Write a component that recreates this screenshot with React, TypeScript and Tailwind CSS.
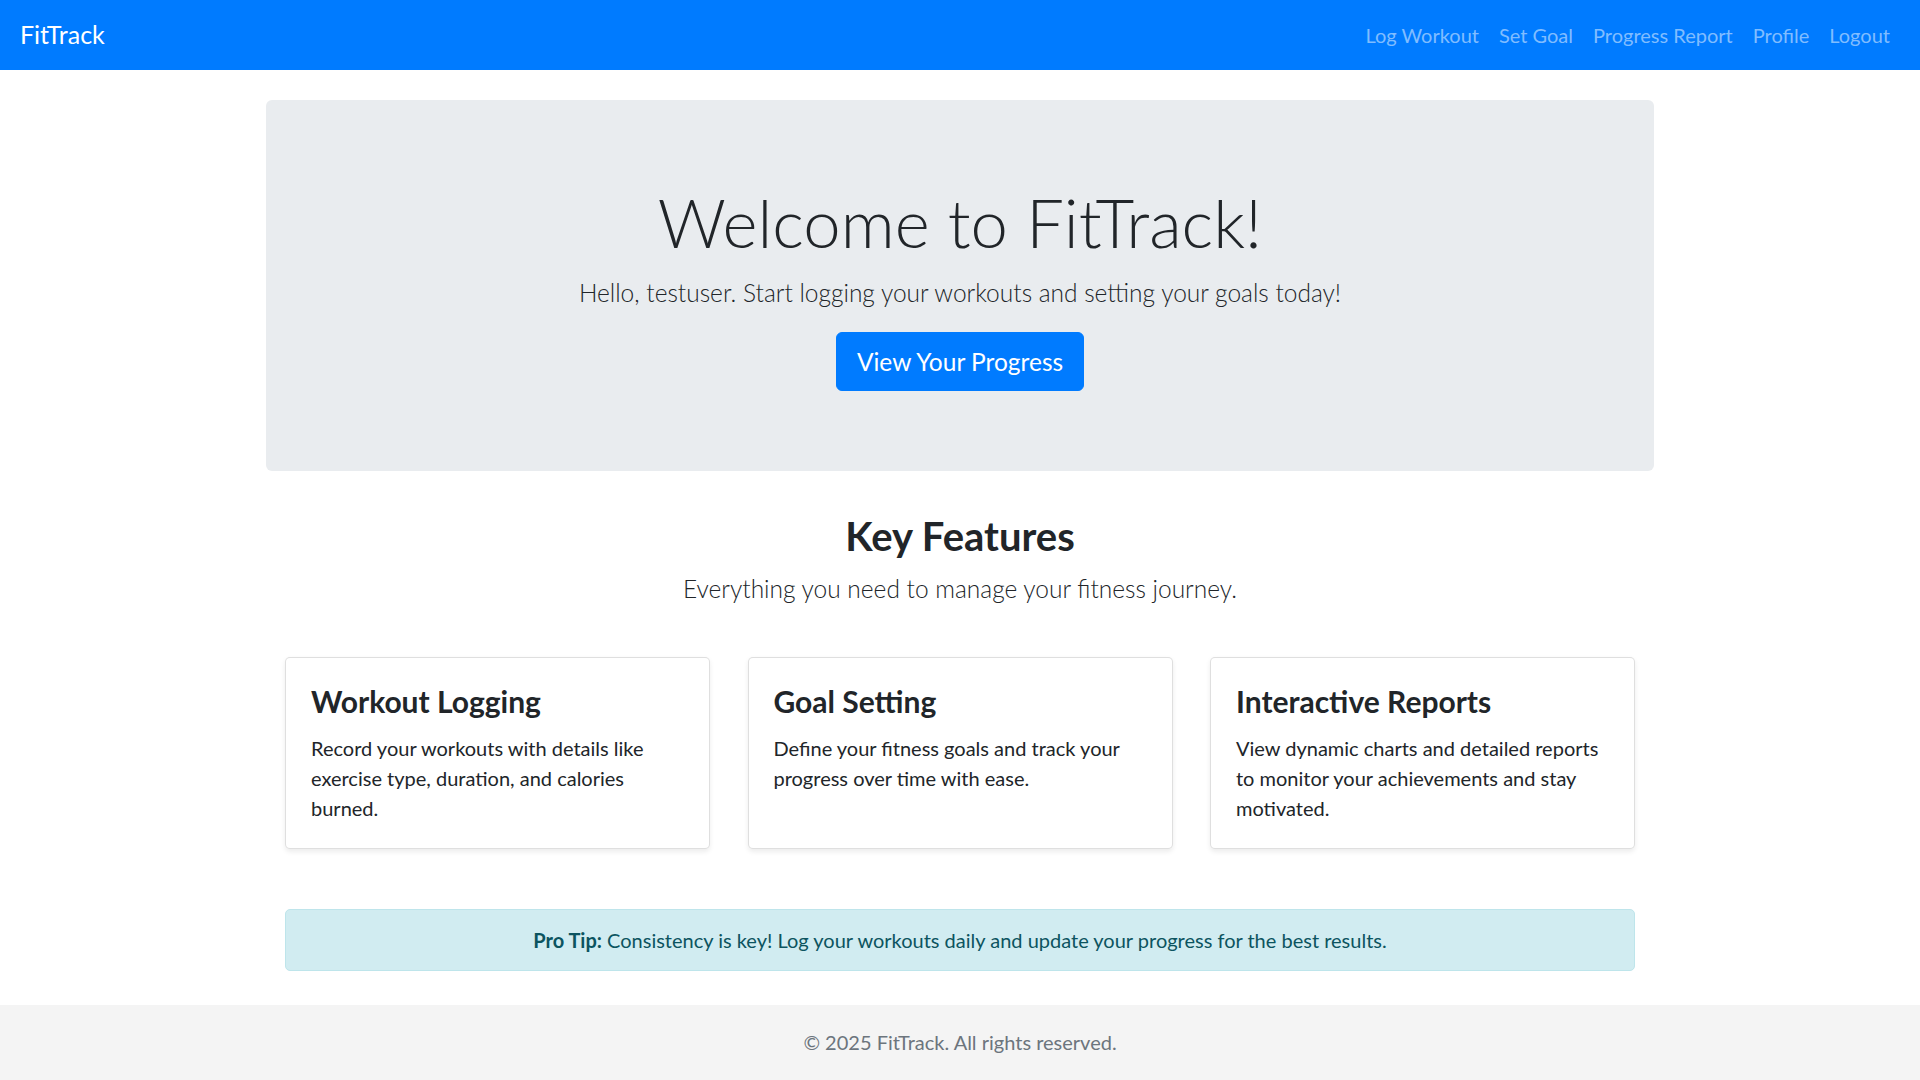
import React from "react";

const features = [
  {
    title: "Workout Logging",
    text: "Record your workouts with details like exercise type, duration, and calories burned.",
  },
  {
    title: "Goal Setting",
    text: "Define your fitness goals and track your progress over time with ease.",
  },
  {
    title: "Interactive Reports",
    text: "View dynamic charts and detailed reports to monitor your achievements and stay motivated.",
  },
];

const links = ["Log Workout", "Set Goal", "Progress Report", "Profile", "Logout"];

export default function App() {
  return (
    <div className="min-h-screen bg-white text-[#212529] font-['Lato','Noto_Sans',sans-serif]">
      <nav className="h-[70px] bg-[#007bff] flex items-center justify-between px-[20px]">
        <a href="#" className="text-white text-[25px] leading-[1.5]">
          FitTrack
        </a>
        <ul className="flex items-center">
          {links.map((l) => (
            <li key={l}>
              <a href="#" className="block px-[10px] text-[20px] leading-[1.5] text-[#80bdff]">
                {l}
              </a>
            </li>
          ))}
        </ul>
      </nav>

      <main className="w-[1425px] mx-auto px-[18.75px]">
        <section className="mt-[30px] rounded-[6px] bg-[#e9ecef] py-[80px] px-[40px] text-center">
          <h1 className="text-[67px] font-light leading-[84px] mb-[10px]">Welcome to FitTrack!</h1>
          <p className="text-[24.5px] font-light leading-[37.5px] mb-[20px]">
            Hello, testuser. Start logging your workouts and setting your goals today!
          </p>
          <a
            href="#"
            className="inline-block bg-[#007bff] border border-[#007bff] text-white text-[24.5px] leading-[37.5px] px-[20px] py-[10px] rounded-[6px]"
          >
            View Your Progress
          </a>
        </section>

        <section className="mt-[41px] text-center">
          <h2 className="text-[40px] font-bold leading-[48px] mb-[10px]">Key Features</h2>
          <p className="text-[24.5px] font-light leading-[37.5px]">
            Everything you need to manage your fitness journey.
          </p>
        </section>

        <div className="mt-[49px] grid grid-cols-3">
          {features.map((f) => (
            <div key={f.title} className="px-[18.75px]">
              <div className="h-full bg-white border border-[rgba(0,0,0,0.125)] rounded-[5px] shadow-[0_2.5px_5px_rgba(0,0,0,0.075)] p-[25px]">
                <h3 className="text-[30px] font-bold leading-[36px] mb-[14px]">{f.title}</h3>
                <p className="text-[20px] leading-[30px]">{f.text}</p>
              </div>
            </div>
          ))}
        </div>

        <div className="px-[18.75px] mt-[60px] mb-[34px]">
          <div className="rounded-[5px] border border-[#bee5eb] bg-[#d1ecf1] text-[#0c5460] py-[15px] px-[25px] text-center text-[20px] leading-[30px]">
            <strong className="font-bold">Pro Tip:</strong> Consistency is key! Log your workouts daily and update
            your progress for the best results.
          </div>
        </div>
      </main>

      <footer className="bg-[#f4f4f4] pt-[22px] pb-[25px] text-center text-[20px] leading-[30px] text-[#6c757d]">
        © 2025 FitTrack. All rights reserved.
      </footer>
    </div>
  );
}
